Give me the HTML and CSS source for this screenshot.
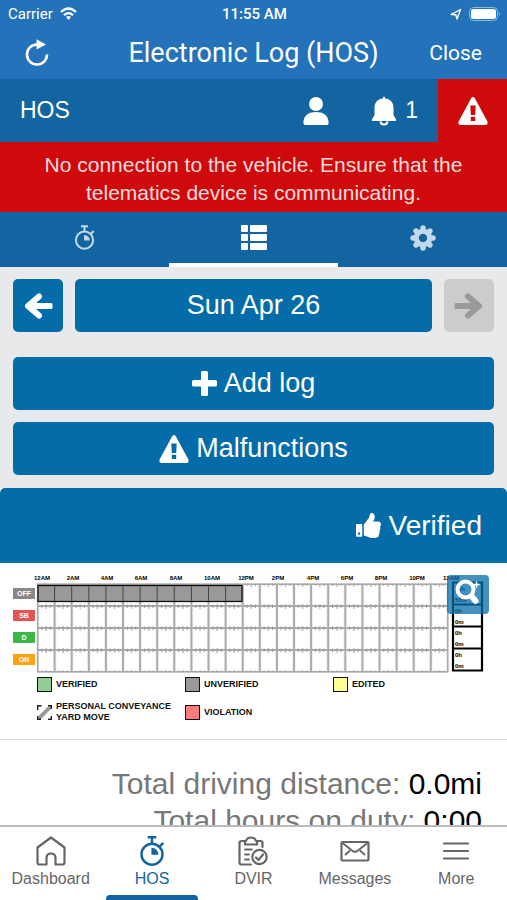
FILE: index.html
```html
<!DOCTYPE html>
<html lang="en">
<head>
<meta charset="utf-8">
<meta name="viewport" content="width=device-width, initial-scale=1">
<title>Electronic Log (HOS)</title>
<link rel="stylesheet" href="styles.css">
</head>
<body>
<svg class="defs" aria-hidden="true">
  <symbol id="warn" viewBox="0 0 30 28">
    <path fill="currentColor" fill-rule="evenodd" d="M13.3 1Q15-1 16.7 1L29.4 24.5Q30.300 27.700 27.500 28H2.500Q-.300 27.700.600 24.500ZM12.300 8.500 12.800 18H17.200L17.700 8.500ZM12.800 19.800V24H17.200V19.800Z"/>
  </symbol>
  <symbol id="watch" viewBox="0 0 24 28">
    <g fill="none" stroke="currentColor" stroke-width="2.300">
      <circle cx="12" cy="17" r="9.800"/>
      <path d="M8 1.200H16M12 1V7M19 10 22.500 6.500"/>
    </g>
    <path fill="currentColor" d="M11.500 11A6.500 6.500 0 0 1 18 17.500H11.500Z"/>
  </symbol>
  <symbol id="arrow" viewBox="0 0 30 26">
    <path fill="none" stroke="currentColor" stroke-width="6" stroke-linecap="round" stroke-linejoin="round" d="M16 3.500 5 13 16 22.500"/>
    <path fill="currentColor" d="M4 13 12 7V10H28Q29.500 10 29.500 11.500V14.500Q29.500 16 28 16H12V19Z"/>
  </symbol>
</svg>

<header class="top">
  <div class="status">
    <span class="carrier">Carrier
      <svg width="17" height="13" viewBox="0 0 17 13"><g fill="none" stroke="#fff" stroke-width="2.200"><path d="M1 5Q8.500-2 16 5"/><path d="M4 8.200Q8.500 4 13 8.200"/></g><path fill="#fff" d="M6 10Q8.500 8 11 10L8.500 13Z"/></svg>
    </span>
    <strong>11:55 AM</strong>
    <span class="power">
      <svg width="12" height="12" viewBox="0 0 12 12"><path d="M1.200 6.500 10.500 1.500 7 11 5.800 6.700Z" fill="none" stroke="#fff" stroke-width="1.400" stroke-linejoin="round"/></svg>
      <svg width="32" height="14" viewBox="0 0 32 14"><rect x=".5" y=".5" width="28" height="13" rx="4" fill="none" stroke="#8fb8de"/><rect x="2" y="2" width="25" height="10" rx="2.500" fill="#fff"/><path d="M30 5Q32 7 30 9Z" fill="#8fb8de"/></svg>
    </span>
  </div>
  <div class="titlebar">
    <button class="refresh" type="button" aria-label="Refresh">
      <svg width="24" height="28" viewBox="0 0 24 28"><path d="M13 5.500H12A10 10 0 1 0 22 15.500" fill="none" stroke="#fff" stroke-width="2.600"/><path d="M11.500.300 21 5.500 11.500 10.500Z" fill="#fff"/></svg>
    </button>
    <h1>Electronic Log (HOS)</h1>
    <button class="close" type="button">Close</button>
  </div>
</header>

<div class="subbar">
  <h2>HOS</h2>
  <button type="button" aria-label="Driver">
    <svg width="26" height="28" viewBox="0 0 26 28" fill="#fff"><circle cx="13" cy="7" r="7"/><path d="M1 27Q0 27 .500 24C1.500 18 6 15 13 15S24.500 18 25.500 24Q26 27 24.500 28H2Q1 28 1 27Z"/></svg>
  </button>
  <button class="bell" type="button">
    <svg width="26" height="30" viewBox="0 0 26 30"><path fill="#fff" d="M12 1.500Q13-.500 14 1.500V2.500C20 3 22.500 7 22.500 12V19L25 23.500Q25.500 25 24 25H2Q.500 25 1 23.500L3.500 19V12C3.500 7 6 3 12 2.500Z"/><path d="M9.500 25.500Q10 28.500 13 28.500T16.500 25.500" fill="none" stroke="#fff" stroke-width="2"/></svg>
    <span>1</span>
  </button>
  <button class="danger" type="button" aria-label="Warnings"><svg width="30" height="28"><use href="#warn"/></svg></button>
</div>

<p class="alert">No connection to the vehicle. Ensure that the telematics device is communicating.</p>

<div class="tabs">
  <button type="button" aria-label="Timers"><svg width="21" height="25"><use href="#watch"/></svg></button>
  <button class="current" type="button" aria-label="Log list">
    <svg width="26" height="26" viewBox="0 0 26 26" fill="#fff"><rect width="7" height="7" rx="1"/><rect x="9" width="17" height="7" rx="1"/><rect y="9" width="7" height="7" rx="1"/><rect x="9" y="9" width="17" height="7" rx="1"/><rect y="18" width="7" height="7" rx="1"/><rect x="9" y="18" width="17" height="7" rx="1"/></svg>
  </button>
  <button type="button" aria-label="Settings">
    <svg width="26" height="26" viewBox="-13 -13 26 26"><g stroke="currentColor" stroke-width="5.400" stroke-linecap="round"><path d="M0-10V-7M0 10V7M-10 0H-7M10 0H7M-7-7-5-5M7 7 5 5M-7 7-5 5M7-7 5-5"/></g><circle r="6.700" fill="none" stroke="currentColor" stroke-width="5"/></svg>
  </button>
</div>

<main>
  <div class="controls">
    <div class="days">
      <button class="btn" type="button" aria-label="Previous day"><svg width="30" height="26"><use href="#arrow"/></svg></button>
      <button class="btn" type="button">Sun Apr 26</button>
      <button class="btn next" type="button" aria-label="Next day" disabled><svg width="30" height="26"><use href="#arrow"/></svg></button>
    </div>
    <button class="btn" type="button"><svg width="25" height="25" viewBox="0 0 25 25"><path fill="#fff" d="M9 1.500Q9 0 10.500 0H14.500Q16 0 16 1.500V9H23.500Q25 9 25 10.500V14Q25 15.500 23.500 15.500H16V23.500Q16 25 14.500 25H10.500Q9 25 9 23.500V15.500H1.500Q0 15.500 0 14V10.500Q0 9 1.500 9H9Z"/></svg>Add log</button>
    <button class="btn" type="button"><svg width="30" height="28"><use href="#warn"/></svg>Malfunctions</button>
  </div>

  <section class="log">
    <div class="verified">
      <svg width="25" height="25" viewBox="0 0 512 512"><path fill="#fff" d="M104 224H24c-13 0-24 11-24 24v216c0 13 11 24 24 24h80c13 0 24-11 24-24V248c0-13-11-24-24-24zM64 448c-13 0-24-11-24-24s11-24 24-24 24 11 24 24-11 24-24 24zM384 81c0 43-26 67-33 95h101c34 0 60 28 60 58 0 18-8 37-20 49 10 24 9 56-9 80 8 26 0 57-17 75 5 17 3 32-6 44C440 512 390 512 347 512c-51 0-91-18-123-32-16-7-36-16-52-16-7 0-12-5-12-12V238c0-3 1-6 4-8 39-39 56-81 89-113 14-15 20-38 25-59C283 39 292 0 312 0c24 0 72 8 72 81z"/></svg>
      Verified
    </div>
    <div class="chart">
      <svg class="graph" viewBox="0 0 507 110" role="img" aria-label="Duty status by hour">
        <defs>
          <pattern id="cell" x="37.500" y="21" width="17.100" height="22" patternUnits="userSpaceOnUse">
            <path d="M0 0V22M17.100 0V22" stroke="#aaa" stroke-width="2.200"/>
            <path d="M0 0H17.100M0 22H17.100" stroke="#aaa" stroke-width="2"/>
            <path d="M4.300 0V2M8.600 0V3M12.800 0V2M4.300 22V20.500M8.600 22V20M12.800 22V20.500" stroke="#999"/>
          </pattern>
        </defs>
        <g class="hours">
          <text x="42" y="17">12AM</text><text x="73" y="17">2AM</text><text x="107" y="17">4AM</text><text x="141" y="17">6AM</text><text x="176" y="17">8AM</text><text x="212" y="17">10AM</text><text x="246" y="17">12PM</text><text x="278" y="17">2PM</text><text x="313" y="17">4PM</text><text x="347" y="17">6PM</text><text x="381" y="17">8PM</text><text x="417" y="17">10PM</text><text x="451" y="17">12AM</text>
        </g>
        <rect x="37.500" y="21" width="410.400" height="88" fill="url(#cell)" stroke="#aaa" stroke-width="1.300"/>
        <rect x="38" y="22.500" width="204" height="16" fill="#999" stroke="#111" stroke-width="1.300"/>
        <path d="M54.600 23V38M71.700 23V38M88.800 23V38M105.900 23V38M123 23V38M140.100 23V38M157.200 23V38M174.300 23V38M191.400 23V38M208.500 23V38M225.600 23V38" stroke="#444"/>
        <g class="duty">
          <rect x="13" y="25" width="22" height="11" fill="#888"/><text x="24" y="33">OFF</text>
          <rect x="13" y="47" width="22" height="11" fill="#e55353"/><text x="24" y="55">SB</text>
          <rect x="13" y="69" width="22" height="11" fill="#3fb649"/><text x="24" y="77">D</text>
          <rect x="13" y="91" width="22" height="11" fill="#ffa310"/><text x="24" y="99">ON</text>
        </g>
        <path d="M453 19.500H482V107.500H453ZM453 41.500H482M453 63.500H482M453 85.500H482" fill="none" stroke="#000" stroke-width="2.200"/>
        <g class="sums">
          <text x="455" y="28">11h</text><text x="455" y="39">56m</text><text x="455" y="50">0h</text><text x="455" y="61">0m</text><text x="455" y="72">0h</text><text x="455" y="83">0m</text><text x="455" y="94">0h</text><text x="455" y="105">0m</text>
        </g>
      </svg>
      <button class="zoom" type="button" aria-label="Zoom in">
        <svg width="42" height="39" viewBox="0 0 42 39"><g fill="none" stroke="#fff" stroke-linecap="round"><circle cx="18.500" cy="14.500" r="8" stroke-width="4"/><path d="M24.500 21 28.500 26" stroke-width="6"/><path d="M27 9.500H32M29.500 7V12" stroke-width="1.500"/></g></svg>
      </button>
    </div>
    <ul class="legend">
      <li><i class="swatch green"></i>VERIFIED</li>
      <li><i class="swatch gray"></i>UNVERIFIED</li>
      <li><i class="swatch yellow"></i>EDITED</li>
      <li><svg width="15" height="15" viewBox="0 0 15 15"><path d="M1.500 11 11 1.500H14V4L4 14H1.500Z" fill="#999"/><path d="M.700 5V.700H4.500M11 .700H14.300V4M.700 11V14.300H4M11 14.300H14.300V11" fill="none" stroke="#222" stroke-width="1.400"/></svg><span>PERSONAL CONVEYANCE<br>YARD MOVE</span></li>
      <li><i class="swatch red"></i>VIOLATION</li>
    </ul>
    <dl class="totals">
      <div><dt>Total driving distance:</dt> <dd>0.0mi</dd></div>
      <div><dt>Total hours on duty:</dt> <dd>0:00</dd></div>
    </dl>
  </section>
</main>

<nav>
  <a href="#dashboard"><svg width="30" height="30" viewBox="0 0 30 30"><path d="M1.500 11.500 15 1.500 28.500 11.500V26.500Q28.500 28.500 26.500 28.500H19.500V22Q19.500 17.500 15 17.500T10.500 22V28.500H3.500Q1.500 28.500 1.500 26.500Z" fill="none" stroke="currentColor" stroke-width="2.200" stroke-linejoin="round"/></svg>Dashboard</a>
  <a class="active" href="#hos"><svg width="26" height="30"><use href="#watch"/></svg>HOS</a>
  <a href="#dvir"><svg width="30" height="30" viewBox="0 0 30 30"><g fill="none" stroke="currentColor" stroke-width="2.200" stroke-linejoin="round" stroke-linecap="round"><path d="M13 28.500H3.500Q1.500 28.500 1.500 26.500V7Q1.500 5 3.500 5H8Q9 1.500 13 1.500T18 5H22.500Q24.500 5 24.500 7V11M7 5V8.500H19V5"/><path d="M7 13.500H14M7 18.500H11M7 23.500H11" stroke-width="1.800"/><circle cx="21.500" cy="21" r="7.200"/><path d="M18 21.500 20.500 24 25 18.500"/></g></svg>DVIR</a>
  <a href="#messages"><svg width="30" height="30" viewBox="0 0 30 30"><g fill="none" stroke="currentColor" stroke-width="2.200" stroke-linejoin="round"><rect x="1.500" y="6" width="27" height="18.500" rx="1"/><path d="M2.500 7 12 14.500Q15 17 18 14.500L27.500 7M5 19 10 14.500M25 19 20 14.500" stroke-width="1.900"/></g></svg>Messages</a>
  <a href="#more"><svg width="28" height="30" viewBox="0 0 28 30"><path d="M2 7.500H26M2 15H26M2 22.500H26" stroke="currentColor" stroke-width="2.200" stroke-linecap="round"/></svg>More</a>
</nav>
</body>
</html>
```
FILE: styles.css
```css
* {
  box-sizing: border-box;
}

body {
  margin: 0;
  height: 100vh;
  display: flex;
  flex-direction: column;
  background: #e8e9eb;
  color: #fff;
  font-family: "Liberation Sans", Arial, sans-serif;
}

button {
  border: 0;
  padding: 0;
  background: none;
  color: inherit;
  font: inherit;
}

h1,
h2,
p,
ul,
dl,
dd {
  margin: 0;
  padding: 0;
  font-weight: 400;
}

svg {
  display: block;
  flex: none;
}

.defs {
  position: absolute;
  width: 0;
  height: 0;
}

.top {
  background: #2472b9;
}

.status {
  display: grid;
  grid-template-columns: 1fr auto 1fr;
  align-items: center;
  height: 27px;
  padding: 0 6px 0 8px;
  font: 15px Roboto, sans-serif;
}

.status strong {
  font-weight: 500;
}

.carrier,
.power {
  display: flex;
  align-items: center;
  gap: 7px;
}

.power {
  justify-content: flex-end;
}

.titlebar {
  display: grid;
  grid-template-columns: 1fr auto 1fr;
  align-items: center;
  height: 52px;
  padding: 0 25px;
  font-family: Roboto, sans-serif;
}

.titlebar h1 {
  font-size: 27px;
}

.refresh {
  justify-self: start;
}

.close {
  justify-self: end;
  font-size: 21px;
}

.subbar {
  display: flex;
  align-items: center;
  height: 63px;
  padding-left: 20px;
  background: #1265a0;
  font-size: 23px;
}

.subbar h2 {
  flex: 1;
  font-size: 23px;
}

.bell {
  display: flex;
  align-items: center;
  gap: 8px;
  margin: 0 20px 0 42px;
}

.danger {
  display: grid;
  place-items: center;
  width: 69px;
  height: 100%;
  background: #cf0a0c;
}

.alert {
  padding: 9px 32px 5px;
  background: #cf0a0c;
  color: #fbdcdc;
  font-size: 21px;
  line-height: 28px;
  text-align: center;
}

.tabs {
  display: grid;
  grid-template-columns: repeat(3, 1fr);
  height: 55px;
  background: #1265a0;
}

.tabs button {
  display: flex;
  justify-content: center;
  align-items: center;
  border-bottom: 4px solid transparent;
  color: #c3d8e8;
}

.tabs .current {
  border-color: #fff;
}

main {
  flex: 1;
  min-height: 0;
  overflow: auto;
  scrollbar-width: none;
}

.controls {
  display: grid;
  gap: 12px;
  padding: 12px 13px 13px;
}

.days {
  display: grid;
  grid-template-columns: 50px 1fr 50px;
  gap: 12px;
  margin-bottom: 13px;
}

.btn {
  display: flex;
  justify-content: center;
  align-items: center;
  gap: 7px;
  height: 53px;
  border-radius: 5px;
  background: #046ca8;
  font-size: 27px;
}

.btn.next {
  background: #cbcccd;
  color: #999;
}

.next svg {
  transform: scaleX(-1);
}

.log {
  background: #fff;
  color: #111;
}

.verified {
  display: flex;
  justify-content: flex-end;
  align-items: center;
  gap: 8px;
  height: 75px;
  padding-right: 25px;
  border-radius: 5px 5px 0 0;
  background: #046ca8;
  color: #fff;
  font-size: 28px;
}

.chart {
  position: relative;
}

.graph {
  width: 100%;
  font-weight: 700;
}

.hours {
  font-size: 6px;
  text-anchor: middle;
}

.duty {
  font-size: 7px;
  text-anchor: middle;
}

.duty text {
  fill: #fff;
}

.sums {
  font-size: 6px;
}

.zoom {
  position: absolute;
  top: 12px;
  right: 18px;
  border-radius: 4px;
  background: rgb(4 108 168 / 75%);
}

.legend {
  display: grid;
  grid-template-columns: repeat(3, minmax(0, 1fr));
  row-gap: 9px;
  padding: 4px 26px 16px 37px;
  border-bottom: 1px solid #ddd;
  font-size: 9px;
  font-weight: 700;
  line-height: 11px;
  list-style: none;
}

.legend li {
  display: flex;
  align-items: center;
  gap: 4px;
  white-space: nowrap;
}

.swatch {
  width: 15px;
  height: 15px;
  border: 1px solid #111;
}

.green {
  background: #94cc96;
}

.gray {
  background: #999;
}

.yellow {
  background: #ffff91;
}

.red {
  background: #ff7c7c;
}

.totals {
  padding: 25px 25px 0;
  font-size: 30px;
  line-height: 37px;
  text-align: right;
}

.totals dt,
.totals dd {
  display: inline;
}

.totals dt {
  color: #777;
}

.totals dd {
  color: #000;
}

nav {
  display: grid;
  grid-template-columns: repeat(5, 1fr);
  height: 75px;
  border-top: 2px solid #bbb;
  background: #fff;
}

nav a {
  display: flex;
  flex-direction: column;
  align-items: center;
  gap: 3px;
  padding-top: 9px;
  color: #666;
  font-size: 16px;
  line-height: 20px;
  text-decoration: none;
}

nav .active {
  color: #1265a0;
}

.active::after {
  content: "";
  width: 92px;
  max-width: 100%;
  height: 5px;
  margin-top: auto;
  border-radius: 4px 4px 0 0;
  background: #1265a0;
}
```
